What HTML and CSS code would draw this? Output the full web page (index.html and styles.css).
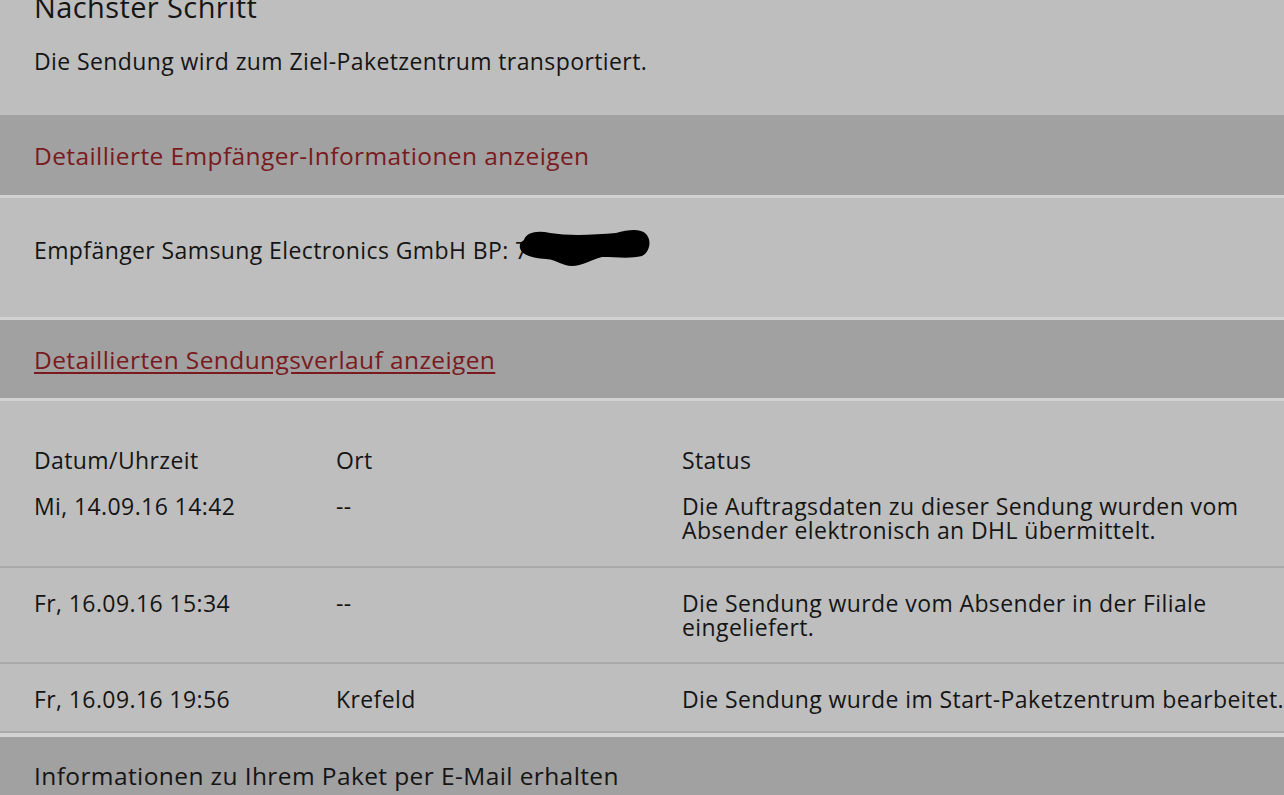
FILE: index.html
```html
<!DOCTYPE html>
<html lang="de">
<head>
    <meta charset="UTF-8">
    <meta name="viewport" content="width=device-width, initial-scale=1.0">
    <title>Sendungsverfolgung</title>
    <link rel="stylesheet" href="styles.css">
</head>
<body>

    <div class="section next-step">
        <h2>Nächster Schritt</h2>
        <p>Die Sendung wird zum Ziel-Paketzentrum transportiert.</p>
    </div>

    <div class="band band-first">
        <a class="toggle">Detaillierte Empfänger-Informationen anzeigen</a>
    </div>

    <div class="section recipient">
        <p>Empfänger Samsung Electronics GmbH BP: <span class="redacted">7<svg class="redact" width="136" height="44" viewBox="0 0 136 44"><path d="M8 14 C10 6 22 4 34 7 C52 10 78 9 100 7 C112 4 124 2 130 8 C136 14 134 26 126 30 C114 33 100 31 86 31 C74 34 66 40 56 40 C46 40 42 34 30 33 C18 32 6 30 4 22 C3 18 5 16 8 14 Z" fill="#000"/></svg></span></p>
    </div>

    <div class="band">
        <a class="toggle underline">Detaillierten Sendungsverlauf anzeigen</a>
    </div>

    <div class="section history">
        <div class="history-row history-head">
            <span>Datum/Uhrzeit</span>
            <span>Ort</span>
            <span>Status</span>
        </div>
        <div class="history-row first">
            <span>Mi, 14.09.16 14:42</span>
            <span>--</span>
            <span>Die Auftragsdaten zu dieser Sendung wurden vom<br>Absender elektronisch an DHL übermittelt.</span>
        </div>
        <div class="history-row">
            <span>Fr, 16.09.16 15:34</span>
            <span>--</span>
            <span>Die Sendung wurde vom Absender in der Filiale<br>eingeliefert.</span>
        </div>
        <div class="history-row last">
            <span>Fr, 16.09.16 19:56</span>
            <span>Krefeld</span>
            <span>Die Sendung wurde im Start-Paketzentrum bearbeitet.</span>
        </div>
    </div>

    <div class="band band-last">
        <span class="plain">Informationen zu Ihrem Paket per E-Mail erhalten</span>
    </div>

</body>
</html>
```

FILE: styles.css
```css
* {
    margin: 0;
    padding: 0;
    box-sizing: border-box;
}
body {
    font-family: 'Open Sans', 'Liberation Sans', sans-serif;
    font-size: 23px;
    letter-spacing: 0.4px;
    line-height: 24px;
    color: #151515;
    background: #bebebe;
    overflow: hidden;
}
.section {
    background: #bebebe;
    padding: 0 34px;
}
.next-step {
    padding-bottom: 42px;
}
.next-step h2 {
    font-size: 29px;
    font-weight: 400;
    letter-spacing: 0.4px;
    line-height: 32px;
    margin-top: -9px;
    margin-bottom: 26px;
}
.band {
    background: #a1a1a1;
    padding: 28px 34px 26px;
    border-top: 3px solid #d2d2d2;
    border-bottom: 3px solid #d2d2d2;
    font-size: 24.5px;
}
.band-first {
    border-top: none;
    padding: 29px 34px 27px;
}
.toggle {
    color: #7a1a1e;
    text-decoration: none;
}
.toggle.underline {
    text-decoration: underline;
    text-underline-offset: 3px;
}
.plain {
    color: #151515;
}
.recipient {
    padding-top: 40px;
    padding-bottom: 55px;
}
.recipient p {
    white-space: nowrap;
}
.redacted {
    position: relative;
}
.redact {
    position: absolute;
    left: 1px;
    top: -8px;
}
.history {
    padding-top: 47px;
    padding-right: 0;
}
.history-row {
    display: grid;
    grid-template-columns: 302px 346px 1fr;
    padding: 23px 0;
    border-bottom: 2px solid #a9a9a9;
    margin-left: -34px;
    padding-left: 34px;
    white-space: nowrap;
}
.history-head {
    padding: 0 0 0 34px;
    border-bottom: none;
}
.history-row.first {
    padding-top: 22px;
    padding-bottom: 24px;
}
.history-row.last {
    padding-bottom: 20px;
}
.band-last {
    border-top-width: 4px;
    border-bottom: none;
    padding-top: 27px;
}
```
